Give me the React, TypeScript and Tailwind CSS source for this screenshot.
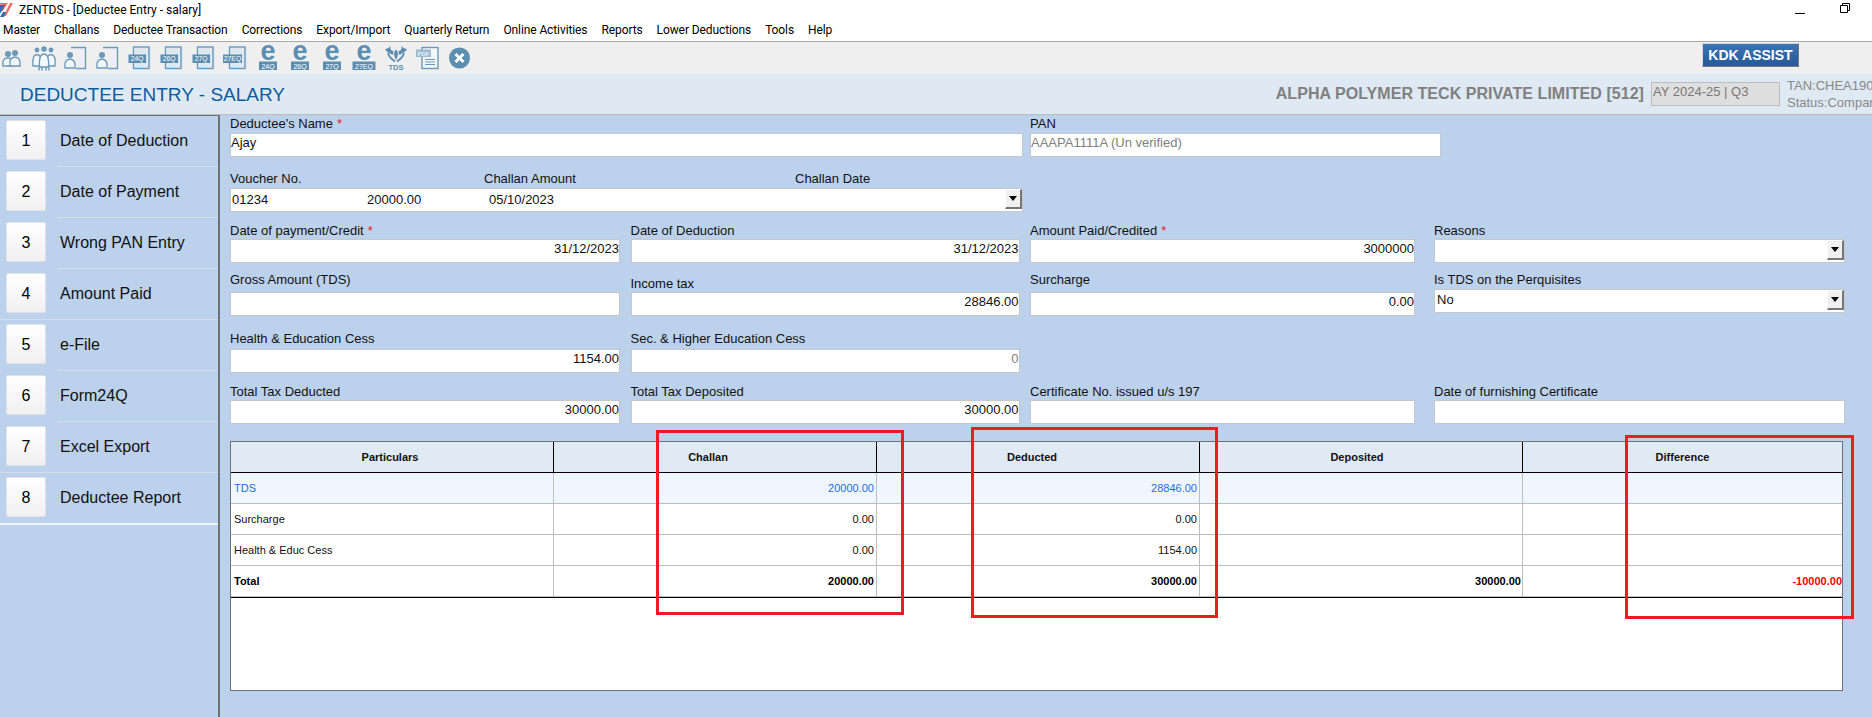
const iconBlue = "#6a9abb";
const blockBlue = "#5b8eb0";

const steps = [
  "Date of Deduction",
  "Date of Payment",
  "Wrong PAN Entry",
  "Amount Paid",
  "e-File",
  "Form24Q",
  "Excel Export",
  "Deductee Report",
];

const menus = [
  "Master",
  "Challans",
  "Deductee Transaction",
  "Corrections",
  "Export/Import",
  "Quarterly Return",
  "Online Activities",
  "Reports",
  "Lower Deductions",
  "Tools",
  "Help",
];

const AppLogo = () => (
  <svg width="13" height="16" viewBox="0 0 13 16" className="shrink-0">
    <path d="M0 1h13L6 14H3z" fill="#f0705f" />
    <path d="M0 3l5 0-5 9z" fill="#2f6db0" />
    <path d="M0 13l8-12h2L3 15H0z" fill="#ffffff" />
    <path d="M0 15l3-5 3 0-2 5z" fill="#2f6db0" />
  </svg>
);

const Person = ({ x, y, w = 10, h = 11 }: { x: number; y: number; w?: number; h?: number }) => (
  <>
    <circle cx={x} cy={y} r={w * 0.3} fill={iconBlue} />
    <path
      d={`M${x - w / 2} ${y + h + 2} q-1 -${h * 0.75} ${w / 2 - 1} -${h * 0.8} h2 q${w / 2} 1 ${w / 2 - 1} ${h * 0.8} z`}
      fill="#f4f7f9"
      stroke={iconBlue}
      strokeWidth="1.4"
    />
  </>
);

const Icon = ({ children }: { children: React.ReactNode }) => (
  <svg width="24" height="30" viewBox="0 0 24 30" className="shrink-0 overflow-visible">
    {children}
  </svg>
);

const TwoPeople = () => (
  <Icon>
    <Person x={8} y={10} w={10} h={10} />
    <Person x={15} y={9} w={10} h={11} />
  </Icon>
);

const Group = () => (
  <Icon>
    <Person x={5} y={6} w={8} h={14} />
    <Person x={19} y={6} w={8} h={14} />
    <Person x={12} y={5} w={9} h={16} />
    <path d="M7 23v3.5M10 23v3.5M14 23v3.5M17 23v3.5" stroke={iconBlue} strokeWidth="1.4" />
  </Icon>
);

const PersonDoc = () => (
  <Icon>
    <path d="M7 3.5h14.5v21H12" fill="none" stroke={iconBlue} strokeWidth="1.4" />
    <Person x={6} y={11} w={10} h={11} />
  </Icon>
);

const DocLabel = ({ label }: { label: string }) => (
  <Icon>
    <rect x="6.5" y="3.5" width="16.5" height="21.5" fill="#dfe8ef" />
    <rect x="5.5" y="3" width="15.5" height="21.5" fill="none" stroke={iconBlue} strokeWidth="1.4" />
    <rect x={label.length > 3 ? -1 : 0.5} y="10.5" width={label.length > 3 ? 19 : 17.5} height="8.5" fill={blockBlue} />
    <text
      x={label.length > 3 ? 8.5 : 9.2}
      y="17.3"
      textAnchor="middle"
      fontSize="6.8"
      fill="#ffffff"
      fontFamily="'Liberation Sans', sans-serif"
    >
      {label}
    </text>
  </Icon>
);

const EFile = ({ label }: { label: string }) => (
  <Icon>
    <text
      x="12"
      y="16"
      textAnchor="middle"
      fontSize="27"
      fontWeight="700"
      fill={blockBlue}
      fontFamily="'Liberation Sans', sans-serif"
    >
      e
    </text>
    <rect x={label.length > 3 ? 0.5 : 3} y="17.5" width={label.length > 3 ? 23 : 18} height="8.5" fill={blockBlue} />
    <text
      x="12"
      y="24.5"
      textAnchor="middle"
      fontSize="7"
      fill="#ffffff"
      fontFamily="'Liberation Sans', sans-serif"
    >
      {label}
    </text>
  </Icon>
);

const TdsIcon = () => (
  <Icon>
    <path d="M12 5.5c-2.5 2.5-2.5 6 0 10.5 2.5-4.5 2.5-8 0-10.5z" fill={blockBlue} />
    <path d="M7 2c-1.5 2 -.5 4.5 3 5.5-1.2 1-1.2 2.5-.2 3.5C5.5 10 2 7.5 1 5c2.5 0 4-1.5 6-3z" fill={blockBlue} />
    <path d="M17 2c1.5 2 .5 4.5-3 5.5 1.2 1 1.2 2.5.2 3.5C18.5 10 22 7.5 23 5c-2.5 0-4-1.5-6-3z" fill={blockBlue} />
    <path d="M4 9c1 4 4 6.5 7 8.5M20 9c-1 4-4 6.5-7 8.5" fill="none" stroke={blockBlue} strokeWidth="1.8" />
    <text
      x="12"
      y="25.5"
      textAnchor="middle"
      fontSize="7.5"
      fontWeight="700"
      fill={blockBlue}
      fontFamily="'Liberation Sans', sans-serif"
    >
      TDS
    </text>
  </Icon>
);

const PdfIcon = () => (
  <Icon>
    <rect x="6" y="3.5" width="16" height="21" fill="#f4f7f9" stroke={iconBlue} strokeWidth="1.4" />
    <rect x="0" y="5.5" width="15" height="7.5" fill="#9dbad0" />
    <text x="7.5" y="11.5" textAnchor="middle" fontSize="6" fill="#ffffff" fontFamily="'Liberation Sans', sans-serif">
      PDF
    </text>
    <path d="M9 15.5h10M9 18h10M9 20.5h10" stroke={iconBlue} strokeWidth="1" />
  </Icon>
);

const CloseIcon = () => (
  <Icon>
    <circle cx="11.5" cy="14" r="10.5" fill={blockBlue} />
    <path d="M7.5 10l8 8M15.5 10l-8 8" stroke="#ffffff" strokeWidth="3" />
  </Icon>
);

const Label = ({ text, required, mb = 0 }: { text: string; required?: boolean; mb?: number }) => (
  <div className="h-[16px] whitespace-nowrap text-[13px] leading-[16px] text-[#111]" style={{ marginBottom: mb }}>
    {text}
    {required && <span className="ml-[4px] text-[#e02020]">*</span>}
  </div>
);

const DropButton = () => (
  <div className="ml-auto flex h-[20px] w-[17px] shrink-0 items-center justify-center self-start border-t border-r-2 border-b-2 border-l border-t-white border-r-[#777] border-b-[#777] border-l-white bg-[#f0f0f0]">
    <svg width="8" height="5" viewBox="0 0 8 5">
      <path d="M0 0h8L4 5z" fill="#000" />
    </svg>
  </div>
);

const Box = ({
  value,
  right,
  muted,
  drop,
  pad = 0,
}: {
  value?: string;
  right?: boolean;
  muted?: boolean;
  drop?: boolean;
  pad?: number;
}) => (
  <div
    className={`flex h-[24px] border border-[#c4c8cc] bg-white text-[13px] leading-[17px] ${right ? "justify-end" : ""} ${
      muted ? "text-[#808080]" : "text-[#111]"
    }`}
  >
    {value && <span style={{ paddingLeft: pad, paddingTop: pad ? 1 : 0 }}>{value}</span>}
    {drop && <DropButton />}
  </div>
);

const Field = ({
  label,
  required,
  value,
  right,
  muted,
  drop,
  mb = 0,
  w,
  up = 0,
  pad = 0,
}: {
  label: string;
  required?: boolean;
  value?: string;
  right?: boolean;
  muted?: boolean;
  drop?: boolean;
  mb?: number;
  w: string;
  up?: number;
  pad?: number;
}) => (
  <div className={`flex shrink-0 flex-col ${w}`} style={{ paddingBottom: up }}>
    <Label text={label} required={required} mb={mb} />
    <Box value={value} right={right} muted={muted} drop={drop} pad={pad} />
  </div>
);

const rows = [
  { name: "TDS", challan: "20000.00", deducted: "28846.00", deposited: "", diff: "", cls: "bg-[#eff6fe] text-[#1a6fd6]" },
  { name: "Surcharge", challan: "0.00", deducted: "0.00", deposited: "", diff: "", cls: "bg-white text-[#111]" },
  { name: "Health & Educ Cess", challan: "0.00", deducted: "1154.00", deposited: "", diff: "", cls: "bg-white text-[#111]" },
  { name: "Total", challan: "20000.00", deducted: "30000.00", deposited: "30000.00", diff: "-10000.00", cls: "bg-white text-[#000] font-bold" },
];

const RedMark = ({ className }: { className: string }) => (
  <div className={`pointer-events-none absolute border-[3px] border-[#ed1c24] ${className}`} />
);

export default function App() {
  return (
    <div className="relative flex h-[717px] w-[1872px] flex-col overflow-hidden bg-white font-['Liberation_Sans',sans-serif]">
      {/* title bar */}
      <div className="flex h-[20px] items-center pr-[22px] font-['Roboto',sans-serif] text-[12px] text-black">
        <AppLogo />
        <span className="ml-[6px]">ZENTDS - [Deductee Entry - salary]</span>
        <svg width="10" height="10" viewBox="0 0 10 10" className="ml-auto">
          <path d="M0 8.5h10" stroke="#000" />
        </svg>
        <svg width="10" height="10" viewBox="0 0 10 10" className="ml-[35px] -translate-y-[2px]">
          <path d="M2.5 2.5V.5h7v7h-2M.5 2.5h7v7h-7z" fill="none" stroke="#000" />
        </svg>
      </div>

      {/* menu */}
      <div className="flex h-[22px] items-center gap-[14px] border-b border-[#a8a8a8] pb-[1px] pl-[3px] font-['Roboto',sans-serif] text-[12px] tracking-[-0.1px] text-black">
        {menus.map((m) => (
          <span key={m}>{m}</span>
        ))}
      </div>

      {/* toolbar */}
      <div className="flex h-[32px] items-start justify-between bg-[#efefef] pr-[73px]">
        <div className="mt-[2px] flex gap-[8px]">
          <TwoPeople />
          <Group />
          <PersonDoc />
          <PersonDoc />
          <DocLabel label="24Q" />
          <DocLabel label="26Q" />
          <DocLabel label="27Q" />
          <DocLabel label="27EQ" />
          <EFile label="24Q" />
          <EFile label="26Q" />
          <EFile label="27Q" />
          <EFile label="27EQ" />
          <TdsIcon />
          <PdfIcon />
          <CloseIcon />
        </div>
        <div className="mt-[1px] flex h-[24px] w-[97px] items-center justify-center border border-t-[#d8d8d8] border-r-[#777] border-b-[#777] border-l-[#d8d8d8] bg-gradient-to-b from-[#3a74b4] to-[#275a96] text-[14px] font-bold text-white">
          KDK ASSIST
        </div>
      </div>

      {/* page header */}
      <div className="flex h-[41px] items-center border-b border-[#b9bdc2] bg-[#dfe9f3]">
        <h1 className="pl-[20px] text-[19px] leading-none font-normal text-[#0b5c9c]">DEDUCTEE ENTRY - SALARY</h1>
        <span className="ml-auto text-[16px] font-bold tracking-[0.05px] text-[#808080]">
          ALPHA POLYMER TECK PRIVATE LIMITED [512]
        </span>
        <div className="ml-[7px] h-[24px] w-[129px] border border-[#bdbdbd] bg-[#dedede] pl-[1px] text-[13px] leading-[18px] text-[#777]">
          AY 2024-25 | Q3
        </div>
        <div className="ml-[7px] w-[85px] overflow-hidden text-[13px] leading-[17px] whitespace-nowrap text-[#888]">
          <div>TAN:CHEA190</div>
          <div>Status:Compan</div>
        </div>
      </div>

      <div className="flex flex-1 bg-[#bcd1ec]">
        {/* steps */}
        <div className="w-[220px] shrink-0 border-r-2 border-[#6e7277]">
          {steps.map((s, i) => (
            <div key={s} className="h-[51px]">
              <div
                className={
                  i === 0
                    ? "h-px bg-[#6e7277]"
                    : i === 4 || i === 7
                      ? "h-px bg-[#d5dde8]"
                      : "ml-[57px] h-px bg-[#d5dde8]"
                }
              />
              <div className="flex items-center pt-[4px] pl-[6px]">
                <div className="flex h-[40px] w-[40px] items-center justify-center rounded-[2px] border border-[#dfe3e8] bg-gradient-to-b from-white to-[#f0f0f0] pt-[2px] text-[16px] text-black">
                  {i + 1}
                </div>
                <span className="ml-[14px] pt-[2px] text-[16px] text-[#111]">{s}</span>
              </div>
            </div>
          ))}
          <div className="h-[2px] bg-[#eef3f9]" />
        </div>

        {/* form */}
        <div className="flex-1 pl-[10px]">
          <div className="flex h-[42px] items-end gap-[7px]">
            <Field w="w-[793px]" label="Deductee's Name" required value="Ajay" mb={1} />
            <Field w="w-[411px]" label="PAN" value="AAAPA1111A (Un verified)" muted mb={1} />
          </div>

          <div className="flex h-[55px] w-[793px] flex-col justify-end">
            <div className="flex h-[16px] text-[13px] leading-[16px] text-[#111]">
              <span className="w-[254px]">Voucher No.</span>
              <span className="w-[311px]">Challan Amount</span>
              <span>Challan Date</span>
            </div>
            <div className="mt-[1px] flex h-[24px] border border-[#c4c8cc] bg-white text-[13px] leading-[17px] text-[#111]">
              <span className="w-[136px] pt-[2px] pl-[1px]">01234</span>
              <span className="w-[122px] pt-[2px]">20000.00</span>
              <span className="pt-[2px]">05/10/2023</span>
              <DropButton />
            </div>
          </div>

          <div className="flex h-[51px] items-end gap-[10.5px]">
            <Field w="w-[390px]" label="Date of payment/Credit" required value="31/12/2023" right />
            <Field w="w-[389px]" label="Date of Deduction" value="31/12/2023" right />
            <Field w="w-[385px]" label="Amount Paid/Credited" required value="3000000" right />
            <div className="ml-[8.5px]">
              <Field w="w-[411px]" label="Reasons" drop />
            </div>
          </div>

          <div className="flex h-[53px] items-end gap-[10.5px]">
            <Field w="w-[390px]" label="Gross Amount (TDS)" mb={4} />
            <Field w="w-[389px]" label="Income tax" value="28846.00" right />
            <Field w="w-[385px]" label="Surcharge" value="0.00" right mb={4} />
            <div className="ml-[8.5px]">
              <Field w="w-[411px]" label="Is TDS on the Perquisites" value="No" drop up={3} mb={1} pad={2} />
            </div>
          </div>

          <div className="flex h-[57px] items-end gap-[10.5px]">
            <Field w="w-[390px]" label="Health & Education Cess" value="1154.00" right mb={2} />
            <Field w="w-[389px]" label="Sec. & Higher Education Cess" value="0" right muted mb={2} />
          </div>

          <div className="flex h-[51px] items-end gap-[10.5px]">
            <Field w="w-[390px]" label="Total Tax Deducted" value="30000.00" right />
            <Field w="w-[389px]" label="Total Tax Deposited" value="30000.00" right />
            <Field w="w-[385px]" label="Certificate No. issued u/s 197" />
            <div className="ml-[8.5px]">
              <Field w="w-[411px]" label="Date of furnishing Certificate" />
            </div>
          </div>

          {/* summary table */}
          <div className="mt-[17px] h-[250px] w-[1613px] border border-[#6e7277] bg-white text-[11px]">
            <div className="grid h-[31px] grid-cols-[323px_323px_323px_323px_1fr] border-b border-black bg-[#e0eaf4] font-bold text-[#111]">
              <div className="flex items-center justify-center border-r border-black pr-[4px]">Particulars</div>
              <div className="flex items-center justify-center border-r border-black pr-[14px]">Challan</div>
              <div className="flex items-center justify-center border-r border-black pr-[12px]">Deducted</div>
              <div className="flex items-center justify-center border-r border-black pr-[8px]">Deposited</div>
              <div className="flex items-center justify-center">Difference</div>
            </div>
            {rows.map((r) => (
              <div
                key={r.name}
                className={`grid h-[31px] grid-cols-[323px_323px_323px_323px_1fr] border-b border-[#bdbdbd] ${r.cls}`}
              >
                <div className="flex items-center border-r border-[#bdbdbd] pl-[3px]">{r.name}</div>
                <div className="flex items-center justify-end border-r border-[#bdbdbd] pr-[2px]">{r.challan}</div>
                <div className="flex items-center justify-end border-r border-[#bdbdbd] pr-[2px]">{r.deducted}</div>
                <div className="flex items-center justify-end border-r border-[#bdbdbd] pr-[1px]">{r.deposited}</div>
                <div className="flex items-center justify-end text-[#ff0000]">{r.diff}</div>
              </div>
            ))}
            <div className="h-px bg-black" />
          </div>
        </div>
      </div>

      {/* review marks drawn over the screenshot */}
      <RedMark className="top-[430px] left-[656px] h-[185px] w-[248px]" />
      <RedMark className="top-[427px] left-[971px] h-[191px] w-[247px]" />
      <RedMark className="top-[435px] left-[1625px] h-[184px] w-[229px]" />
    </div>
  );
}
